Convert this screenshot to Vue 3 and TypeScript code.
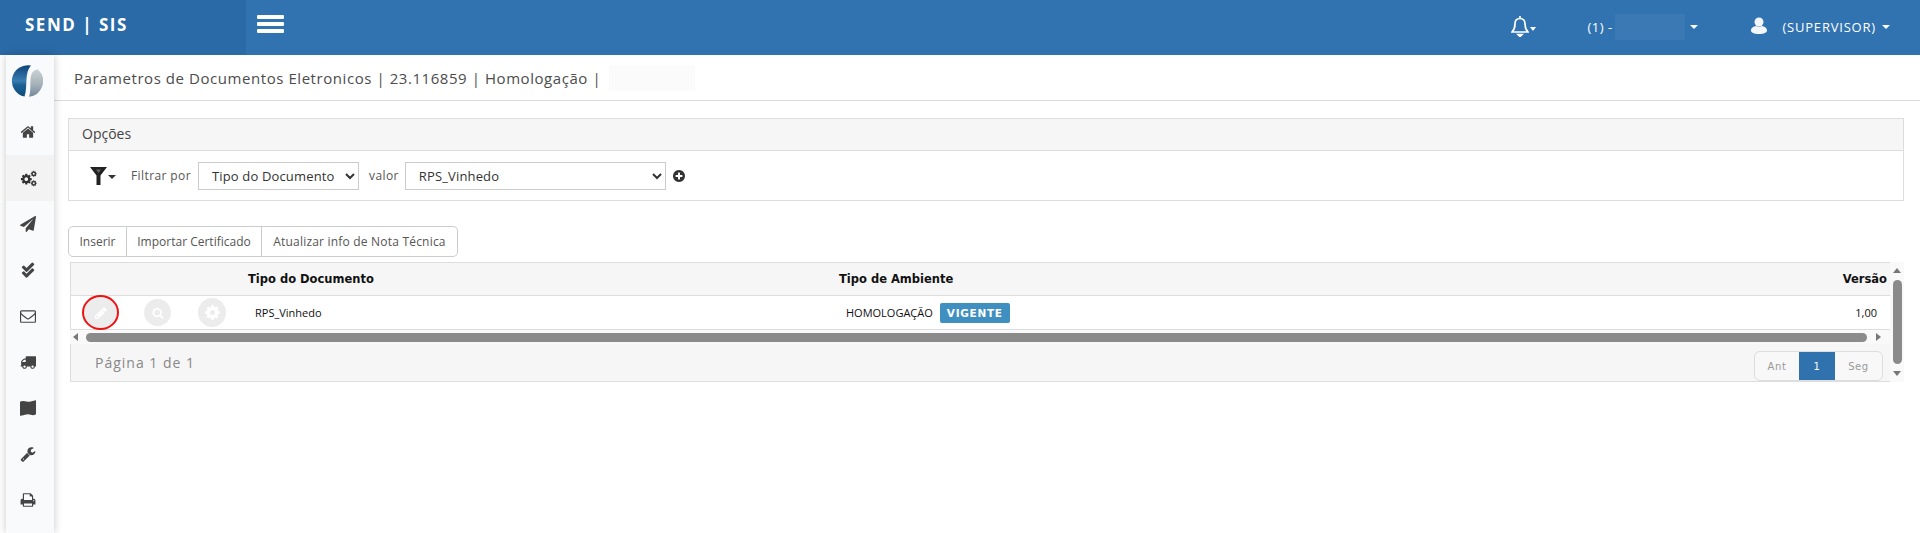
<script setup lang="ts">
const icons: Record<string, string> = {
  home: 'M1472 992v480q0 26-19 45t-45 19h-384v-384H768v384H384q-26 0-45-19t-19-45V992q0-1 .5-3t.5-3l575-474 575 474q1 2 1 6zm223-69l-62 74q-8 9-21 11h-3q-13 0-21-7L896 398 204 1001q-12 8-24 7-13-2-21-11l-62-74q-8-10-7-23.500t11-21.500l719-599q32-26 76-26t76 26l244 204V288q0-14 9-23t23-9h192q14 0 23 9t9 23v408l219 182q10 8 11 21.500t-7 23.500z',
  plane: 'M1764 11q33 24 27 64l-256 1536q-5 29-32 45-14 8-31 8-11 0-24-5l-453-185-242 295q-18 23-49 23-13 0-22-4-19-7-30.500-23.500t-11.500-36.500v-349l864-1059-1069 925-395-162q-37-14-40-55-2-40 32-59l1664-960q15-9 32-9 19 0 36 11z',
  mail: 'M1664 1504v-768q-32 36-69 66-268 206-426 338-51 43-83 67t-86.500 48.500-102.500 24.500h-2q-48 0-102.500-24.500t-86.500-48.500-83-67q-158-132-426-338-37-30-69-66v768q0 13 9.500 22.500t22.500 9.500h1472q13 0 22.500-9.500t9.500-22.500zm0-1051v-24.500l-.5-13-3-12.500-5.500-9-9-7.500-14-2.500h-1472q-13 0-22.500 9.500t-9.500 22.500q0 168 147 284 193 152 401 317 6 5 35 29.500t46 37.500 44.500 31.500 50.500 27.500 43 9h2q20 0 43-9t50.500-27.500 44.500-31.500 46-37.500 35-29.500q208-165 401-317 54-43 100.500-115.500t46.500-131.500zm128-37v1088q0 66-47 113t-113 47h-1472q-66 0-113-47t-47-113v-1088q0-66 47-113t113-47h1472q66 0 113 47t47 113z',
  truck: 'M640 1408q0-52-38-90t-90-38-90 38-38 90 38 90 90 38 90-38 38-90zm-384-512h384v-256h-158q-13 0-22 9l-195 195q-9 9-9 22v30zm1280 512q0-52-38-90t-90-38-90 38-38 90 38 90 90 38 90-38 38-90zm256-1088v1024q0 15-4 26.500t-13.500 18.500-16.500 11.500-23.500 6-22.500 2-25.500 0-22.500-.5q0 106-75 181t-181 75-181-75-75-181h-384q0 106-75 181t-181 75-181-75-75-181h-64q-3 0-22.500.5t-25.500 0-22.500-2-23.500-6-16.500-11.500-13.500-18.500-4-26.500q0-26 19-45t45-19v-320q0-8-.5-35t0-38 2.500-34.500 6.500-37 14-30.500 22.500-30l198-198q19-19 50.500-32t58.500-13h160v-192q0-26 19-45t45-19h1024q26 0 45 19t19 45z',
  map: 'M0 200Q260 40 560 140T1200 160T1792 40V1600Q1500 1760 1200 1650T560 1640T0 1760Z',
  wrench: 'M448 1472q0-26-19-45t-45-19-45 19-19 45 19 45 45 19 45-19 19-45zm644-420l-682 682q-37 37-90 37-52 0-91-37l-106-108q-38-36-38-90 0-53 38-91l681-681q39 98 114.500 173.500t173.500 114.500zm634-435q0 39-23 106-47 134-164.500 217.500t-258.500 83.500q-185 0-316.500-131.500t-131.500-316.500 131.500-316.500 316.500-131.500q58 0 121.500 16.500t107.500 46.500q16 11 16 28t-16 28l-293 169v224l193 107q5-3 79-48.500t135.500-81 70.500-35.500q15 0 23.500 10t8.500 25z',
  print: 'M448 1536h896v-256h-896v256zm0-640h896v-384h-160q-40 0-68-28t-28-68v-160h-640v640zm1152 64q0-26-19-45t-45-19-45 19-19 45 19 45 45 19 45-19 19-45zm128 0v416q0 13-9.500 22.500t-22.500 9.500h-224v160q0 40-28 68t-68 28h-960q-40 0-68-28t-28-68v-160h-224q-13 0-22.500-9.500t-9.500-22.500v-416q0-79 56.500-135.500t135.500-56.500h64v-544q0-40 28-68t68-28h672q40 0 88 20t76 48l152 152q28 28 48 76t20 88v256h64q79 0 135.500 56.500t56.500 135.500z',
  plus: 'M1344 960v-128q0-26-19-45t-45-19h-256v-256q0-26-19-45t-45-19h-128q-26 0-45 19t-19 45v256h-256q-26 0-45 19t-19 45v128q0 26 19 45t45 19h256v256q0 26 19 45t45 19h128q26 0 45-19t19-45v-256h256q26 0 45-19t19-45zm320-64q0 209-103 385.500t-279.500 279.500-385.500 103-385.500-103-279.500-279.500-103-385.500 103-385.500 279.500-279.500 385.500-103 385.500 103 279.500 279.500 103 385.500z',
  search: 'M1216 832q0-185-131.500-316.500t-316.500-131.500-316.500 131.500-131.500 316.500 131.500 316.500 316.500 131.500 316.500-131.500 131.500-316.500zm512 832q0 52-38 90t-90 38q-54 0-90-38l-343-342q-179 124-399 124-143 0-273.500-55.500t-225-150-150-225-55.500-273.500 55.500-273.500 150-225 225-150 273.500-55.500 273.500 55.500 225 150 150 225 55.500 273.500q0 220-124 399l343 343q37 37 37 90z',
  pencil: 'M491 1536l91-91-235-235-91 91v107h128v128h107zm523-928q0-22-22-22-10 0-17 7l-542 542q-7 7-7 17 0 22 22 22 10 0 17-7l542-542q7-7 7-17zm-54-192l416 416-832 832h-416v-416zm683 96q0 53-37 90l-166 166-416-416 166-165q36-38 90-38 53 0 91 38l235 234q37 39 37 91z',
  cog: 'M1152 896q0-106-75-181t-181-75-181 75-75 181 75 181 181 75 181-75 75-181zm512-109v222q0 12-8 23t-20 13l-185 28q-19 54-39 91 35 50 107 138 10 12 10 25t-9 23q-27 37-99 108t-94 71q-12 0-26-9l-138-108q-44 23-91 38-16 136-29 186-7 28-36 28h-222q-14 0-24.500-8.500t-11.500-21.500l-28-184q-49-16-90-37l-141 107q-10 9-25 9-14 0-25-11-126-114-165-168-7-10-7-23 0-12 8-23 15-21 51-66.500t54-70.500q-27-50-41-99l-183-27q-13-2-21-12.500t-8-23.500v-222q0-12 8-23t19-13l186-28q14-46 39-92-40-57-107-138-10-12-10-24 0-10 9-23 26-36 98.500-107.500t94.500-71.500q13 0 26 10l138 107q44-23 91-38 16-136 29-186 7-28 36-28h222q14 0 24.500 8.500t11.500 21.500l28 184q49 16 90 37l142-107q9-9 24-9 13 0 25 10 129 119 165 170 7 8 7 22 0 12-8 23-15 21-51 66.500t-54 70.500q26 50 41 98l183 28q13 2 21 12.500t8 23.500z',
}
const check = 'M1671 566q0 40-28 68l-724 724-136 136q-28 28-68 28t-68-28l-136-136-362-362q-28-28-28-68t28-68l136-136q28-28 68-28t68 28l294 295 656-657q28-28 68-28t68 28l136 136q28 28 28 68z'
const menu = ['home', 'cogs', 'plane', 'checks', 'mail', 'truck', 'map', 'wrench', 'print']
const docTypes = ['Tipo do Documento', 'Tipo de Ambiente', 'Versão']
const docValues = ['RPS_Vinhedo', 'NFe', 'CTe']
</script>

<template>
  <div class="page">
    <header class="topbar">
      <div class="brand">SEND | SIS</div>
      <div class="burger"><i></i><i></i><i></i></div>
      <div class="top-right">
        <div class="bell">
          <svg viewBox="0 0 18 22" width="18" height="22"><path d="M9 1v2.500M9 3.500c-3.500 0-5 2.500-5 5.500 0 4-1.500 6.500-3 8h16c-1.500-1.500-3-4-3-8 0-3-1.500-5.500-5-5.500zM7 19.500h4L9 21.500z" fill="none" stroke="#fff" stroke-width="1.700"/></svg>
          <span class="caret small"></span>
        </div>
        <div class="company">
          <span>(1) -</span>
          <span class="blur-top"></span>
          <span class="caret"></span>
        </div>
        <div class="account">
          <svg class="user" viewBox="0 0 16 17" width="16" height="17"><circle cx="8" cy="5" r="4.500" fill="#fff"/><path d="M0 13.500c0-3 3-4 5-4.500 1.500 1 4.500 1 6 0 2 .5 5 1.500 5 4.500 0 2-3 3.500-8 3.500s-8-1.500-8-3.500z" fill="#fff"/></svg>
          <span>(SUPERVISOR)</span>
          <span class="caret"></span>
        </div>
      </div>
    </header>

    <div class="body">
      <nav class="side">
        <div class="logo">
          <svg viewBox="0 0 32 32" width="32" height="32">
            <defs>
              <linearGradient id="lb" x1="0" y1="0" x2="0" y2="1"><stop offset="0" stop-color="#0c4478"/><stop offset=".5" stop-color="#3a7db2"/><stop offset=".62" stop-color="#1f6396"/><stop offset="1" stop-color="#0b4b7c"/></linearGradient>
              <linearGradient id="lg" x1="0" y1="0" x2="0" y2="1"><stop offset="0" stop-color="#c9d1d5"/><stop offset=".5" stop-color="#a9b5bb"/><stop offset="1" stop-color="#74889a"/></linearGradient>
            </defs>
            <path d="M20 .6A15.800 15.800 0 0 0 13.500 31.600C15.500 26 15 20 15.500 14 16 8 17 4 20 .6z" fill="url(#lb)"/>
            <path d="M18 31.800A15.800 15.800 0 0 0 27 4.500C22.500 4.500 20 8 19.500 14 19 20 20 26 18 31.800z" fill="url(#lg)"/>
          </svg>
        </div>
        <div v-for="m in menu" :key="m" class="side-item" :class="{ active: m === 'cogs' }">
          <svg v-if="m === 'cogs'" viewBox="0 0 1792 1792" width="17" height="17">
            <path :d="icons.cog" transform="translate(0 300) scale(.74)" fill="#333"/>
            <path :d="icons.cog" transform="translate(1090 40) scale(.4)" fill="#333"/>
            <path :d="icons.cog" transform="translate(1090 1040) scale(.4)" fill="#333"/>
          </svg>
          <svg v-else-if="m === 'checks'" viewBox="0 0 1792 1792" width="16" height="16">
            <path :d="check" transform="translate(90 -240) scale(.9)" fill="#444"/>
            <path :d="check" transform="translate(90 400) scale(.9)" fill="#444"/>
          </svg>
          <svg v-else viewBox="0 0 1792 1792" width="16" height="16"><path :d="icons[m]" fill="#444"/></svg>
        </div>
      </nav>

      <main class="content">
        <div class="title-bar">
          <span>Parametros de Documentos Eletronicos | 23.116859 | Homologação |</span>
          <span class="blur-title"></span>
        </div>

        <section class="panel">
          <div class="panel-head">Opções</div>
          <div class="panel-body">
            <div class="filter-btn">
              <svg viewBox="0 0 17 18" width="17" height="18"><path d="M0 0H17L10.500 8.500V18H6.500V8.500Z" fill="#222"/><path d="M6 2.500H11L8.500 6Z" fill="#666"/></svg>
              <span class="caret dark"></span>
            </div>
            <label class="lbl">Filtrar por</label>
            <select class="sel sel-a"><option v-for="d in docTypes" :key="d">{{ d }}</option></select>
            <label class="lbl val">valor</label>
            <select class="sel sel-b"><option v-for="d in docValues" :key="d">{{ d }}</option></select>
            <svg class="plus" viewBox="0 0 1792 1792" width="14" height="14"><path :d="icons.plus" fill="#333"/></svg>
          </div>
        </section>

        <div class="btn-group">
          <button>Inserir</button>
          <button>Importar Certificado</button>
          <button>Atualizar info de Nota Técnica</button>
        </div>

        <section class="grid-wrap">
          <div class="grid-main">
            <div class="row head">
              <div class="c-actions"></div>
              <div class="c-doc">Tipo do Documento</div>
              <div class="c-env">Tipo de Ambiente</div>
              <div class="c-ver">Versão</div>
            </div>
            <div class="row data">
              <div class="c-actions">
                <span class="round marked"><svg viewBox="0 0 1792 1792" width="14" height="14"><path :d="icons.pencil" fill="#fff"/></svg></span>
                <span class="round r2"><svg viewBox="0 0 1792 1792" width="12" height="12"><path :d="icons.search" fill="#fff"/></svg></span>
                <span class="round r3"><svg viewBox="0 0 1792 1792" width="17" height="17"><path :d="icons.cog" fill="#fff"/></svg></span>
              </div>
              <div class="c-doc">RPS_Vinhedo</div>
              <div class="c-env">HOMOLOGAÇÃO <span class="badge">VIGENTE</span></div>
              <div class="c-ver">1,00</div>
            </div>
            <div class="hscroll">
              <span class="arrow left"></span>
              <span class="thumb"></span>
              <span class="arrow right"></span>
            </div>
            <div class="foot">
              <span class="pg-text">Página 1 de 1</span>
              <div class="pager">
                <span class="p-ant">Ant</span><span class="on">1</span><span class="p-seg">Seg</span>
              </div>
            </div>
          </div>
          <div class="vscroll">
            <span class="arrow up"></span>
            <span class="vthumb"></span>
            <span class="arrow down"></span>
          </div>
        </section>
      </main>
    </div>
  </div>
</template>

<style>
html, body { margin: 0; background: #fff; overflow: hidden; }
</style>

<style scoped>
.page { width: 1920px; height: 533px; overflow: hidden; font-family: "Open Sans", "DejaVu Sans", sans-serif; color: #444; display: flex; flex-direction: column; }
.topbar { height: 55px; background: #3173b0; display: flex; align-items: center; color: #fff; flex: none; }
.brand { width: 246px; height: 55px; background: #2a6aa6; box-sizing: border-box; padding: 0 0 6px 25px; font-size: 17px; font-weight: 700; line-height: 49px; letter-spacing: 1.500px; white-space: pre; }
.burger { margin-left: 11px; margin-top: -7px; width: 27px; display: flex; flex-direction: column; gap: 3px; }
.burger i { display: block; height: 4px; background: #fff; border-radius: 1px; }
.top-right { margin-left: auto; display: flex; align-items: center; font-size: 13px; letter-spacing: .8px; margin-top: -1px; height: 54px; }
.bell { display: flex; align-items: center; width: 76px; margin-top: -2px; }
.bell .caret { margin-top: 5px; margin-left: 1px; }
.company { display: flex; align-items: center; width: 164px; font-size: 13px; letter-spacing: .5px; margin-top: -1px; }
.blur-top { width: 70px; height: 26px; margin-left: 2px; margin-right: 5px; background: #3a79b4; }
.account { display: flex; align-items: center; margin-right: 30px; margin-top: -1px; }
.account .user { margin-right: 15px; margin-top: -3px; opacity: .95; }
.account .caret { margin-left: 6px; }
.caret { display: inline-block; width: 0; height: 0; border-left: 4px solid transparent; border-right: 4px solid transparent; border-top: 4px solid #fff; }
.caret.small { border-left-width: 3.500px; border-right-width: 3.500px; }
.caret.dark { border-top-color: #333; margin-left: 1px; margin-top: 2px; }

.body { flex: 1; display: flex; min-height: 0; }
.side { width: 48px; margin-left: 6px; background: #f9fafc; box-shadow: 0 0 8px rgba(0,0,0,.22); flex: none; display: flex; flex-direction: column; position: relative; }
.logo { height: 54px; display: flex; align-items: center; justify-content: center; }
.logo svg { margin-left: -6px; margin-top: -3px; }
.side-item { height: 46px; display: flex; align-items: center; justify-content: center; flex: none; }
.side-item svg { margin-left: -4px; }
.side-item.active { background: #f3f3f3; }

.content { flex: 1; min-width: 0; }
.title-bar { height: 45px; box-sizing: content-box; border-bottom: 1px solid #dcdcdc; display: flex; align-items: center; padding-left: 20px; font-size: 15px; color: #4c4c4c; letter-spacing: .56px; }
.blur-title { width: 86px; height: 26px; margin-left: 8px; background: #fbfbfb; }

.panel { margin: 17px 16px 0 14px; border: 1px solid #ddd; }
.panel-head { height: 32px; box-sizing: border-box; background: #f6f6f6; border-bottom: 1px solid #ddd; padding-left: 13px; line-height: 29px; font-size: 14px; color: #444; }
.panel-body { height: 49px; display: flex; align-items: center; font-size: 12px; box-sizing: border-box; }
.filter-btn { width: 41px; padding-left: 21px; display: flex; align-items: center; margin-top: 1px; }
.lbl { letter-spacing: .4px; color: #555; }
.sel { height: 28px; background: #fff; border: 1px solid #ccc; font-family: inherit; font-size: 13px; letter-spacing: .15px; color: #333; padding-left: 9px; box-sizing: border-box; }
.sel-a { width: 161px; margin-left: 7px; }
.val { margin-left: 10px; }
.sel-b { width: 261px; margin-left: 6px; }
.plus { margin-left: 6px; }

.btn-group { display: flex; margin: 25px 0 0 14px; height: 31px; }
.btn-group button { height: 31px; background: #fff; border: 1px solid #ccc; border-left-width: 0; font-family: inherit; font-size: 12px; color: #555; padding: 0; }
.btn-group button:nth-child(1) { width: 59px; border-left-width: 1px; border-radius: 5px 0 0 5px; }
.btn-group button:nth-child(2) { width: 135px; }
.btn-group button:nth-child(3) { width: 196px; border-radius: 0 5px 5px 0; letter-spacing: .2px; }

.grid-wrap { margin: 5px 0 0 16px; width: 1834px; display: flex; }
.grid-main { width: 1820px; box-sizing: border-box; flex: none; }
.row { display: flex; align-items: center; border: 1px solid #ddd; border-right: 0; box-sizing: border-box; color: #111; font-size: 11px; }
.row.head { height: 34px; background: #f6f6f6; font-family: "DejaVu Sans", sans-serif; font-weight: 700; font-size: 11.500px; }
.row.data { height: 34px; border-top: 0; }
.c-actions { width: 177px; display: flex; align-items: center; flex: none; }
.c-doc { width: 591px; flex: none; }
.row.data .c-doc { padding-left: 7px; box-sizing: border-box; }
.c-env { flex: 1; display: flex; align-items: center; gap: 7px; }
.row.data .c-env { padding-left: 7px; }
.c-ver { padding-right: 3px; }
.row.data .c-ver { padding-right: 13px; }
.round { width: 27px; height: 27px; border-radius: 50%; background: #ececec; display: flex; align-items: center; justify-content: center; flex: none; box-sizing: border-box; }
.marked { margin-left: 11px; width: 37px; height: 35px; border: 2px solid #e11; }
.r2 { margin-left: 25px; }
.r3 { margin-left: 27px; width: 28px; height: 29px; }
.badge { background: #3f8fc0; color: #fff; font-family: "DejaVu Sans", sans-serif; font-weight: 700; font-size: 10.500px; border-radius: 2px; padding: 4px 7px; letter-spacing: .7px; }

.hscroll { height: 14px; display: flex; align-items: center; background: #f9f9f9; }
.arrow { display: block; width: 0; height: 0; flex: none; }
.arrow.left { border-top: 4.500px solid transparent; border-bottom: 4.500px solid transparent; border-right: 5px solid #777; margin-left: 3px; }
.arrow.right { border-top: 4.500px solid transparent; border-bottom: 4.500px solid transparent; border-left: 5px solid #777; margin-left: 9px; margin-right: 9px; }
.thumb { flex: 1; height: 9px; background: #8b8b8b; border-radius: 5px; margin-left: 8px; }
.foot { height: 38px; background: #f6f6f6; border: 1px solid #ddd; border-top: 0; border-right: 0; display: flex; align-items: center; justify-content: space-between; box-sizing: border-box; }
.pg-text { margin-left: 24px; font-size: 14px; color: #888; letter-spacing: 1px; }
.pager { display: flex; height: 30px; align-self: flex-end; border: 1px solid #ddd; border-radius: 6px; background: #f8f8f8; margin-right: 7px; font-family: "DejaVu Sans", sans-serif; font-size: 10px; color: #999; letter-spacing: .6px; overflow: hidden; box-sizing: border-box; }
.pager span { display: flex; align-items: center; justify-content: center; }
.p-ant { width: 44px; }
.p-seg { width: 47px; }
.pager .on { width: 36px; background: #2f72ae; color: #fff; margin: -1px 0; }

.vscroll { width: 14px; flex: none; display: flex; flex-direction: column; align-items: center; background: #f9f9f9; height: 120px; }
.arrow.up { border-left: 4.500px solid transparent; border-right: 4.500px solid transparent; border-bottom: 5px solid #777; margin-top: 6px; }
.arrow.down { border-left: 4.500px solid transparent; border-right: 4.500px solid transparent; border-top: 5px solid #777; margin-top: 7px; margin-bottom: 6px; }
.vthumb { width: 9px; flex: 1; background: #8b8b8b; border-radius: 5px; margin-top: 7px; }
</style>
